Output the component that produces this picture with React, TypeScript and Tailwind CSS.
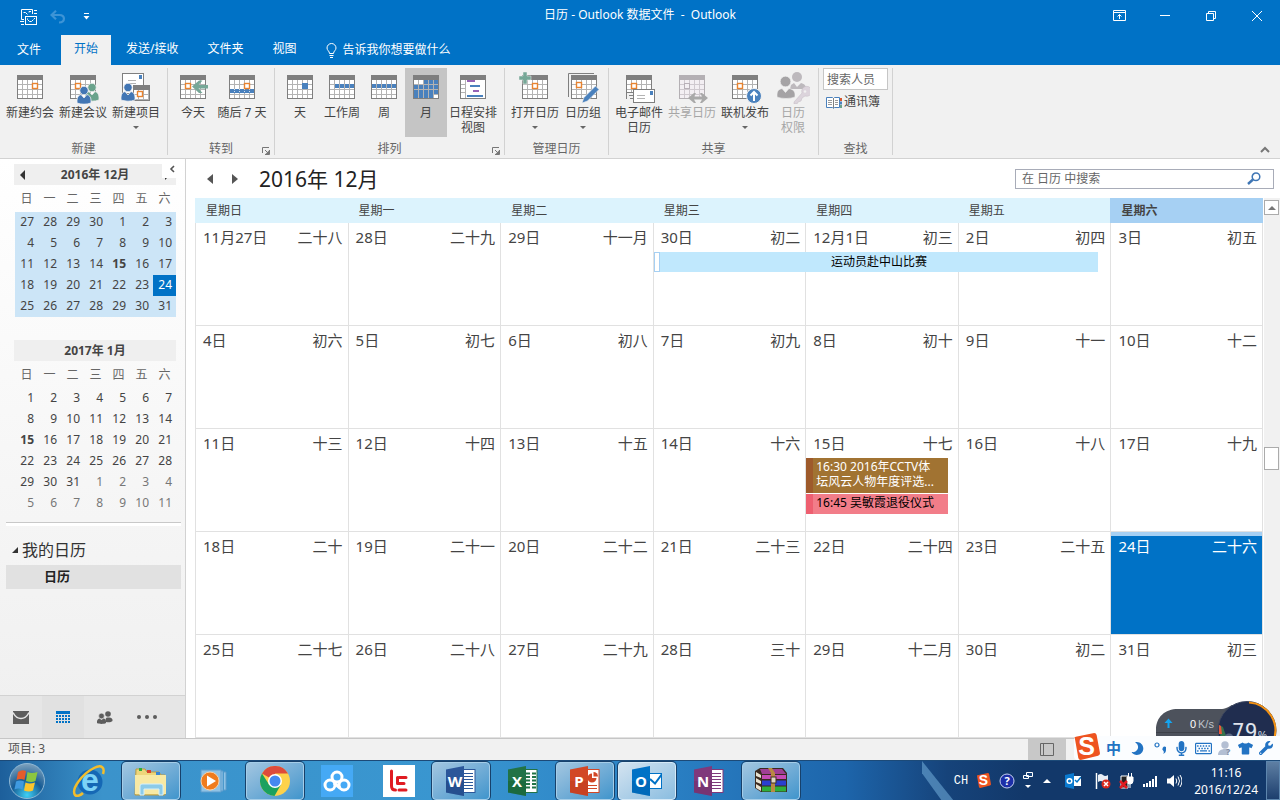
import React from "react";
import { FaMoon, FaMicrophone, FaTshirt, FaWrench, FaRegKeyboard } from "react-icons/fa";

type Kids = { children?: React.ReactNode };

const weekShort = ["日", "一", "二", "三", "四", "五", "六"];

const december = [
  [27, 28, 29, 30, 1, 2, 3],
  [4, 5, 6, 7, 8, 9, 10],
  [11, 12, 13, 14, 15, 16, 17],
  [18, 19, 20, 21, 22, 23, 24],
  [25, 26, 27, 28, 29, 30, 31],
];

const january = [
  [1, 2, 3, 4, 5, 6, 7],
  [8, 9, 10, 11, 12, 13, 14],
  [15, 16, 17, 18, 19, 20, 21],
  [22, 23, 24, 25, 26, 27, 28],
  [29, 30, 31, 1, 2, 3, 4],
  [5, 6, 7, 8, 9, 10, 11],
];

const month = [
  [["11月27日", "二十八"], ["28日", "二十九"], ["29日", "十一月"], ["30日", "初二"], ["12月1日", "初三"], ["2日", "初四"], ["3日", "初五"]],
  [["4日", "初六"], ["5日", "初七"], ["6日", "初八"], ["7日", "初九"], ["8日", "初十"], ["9日", "十一"], ["10日", "十二"]],
  [["11日", "十三"], ["12日", "十四"], ["13日", "十五"], ["14日", "十六"], ["15日", "十七"], ["16日", "十八"], ["17日", "十九"]],
  [["18日", "二十"], ["19日", "二十一"], ["20日", "二十二"], ["21日", "二十三"], ["22日", "二十四"], ["23日", "二十五"], ["24日", "二十六"]],
  [["25日", "二十七"], ["26日", "二十八"], ["27日", "二十九"], ["28日", "三十"], ["29日", "十二月"], ["30日", "初二"], ["31日", "初三"]],
];

/* ---------- ribbon icons ---------- */

// calendar sheet, 26x24, drawn with its top left corner at x, y
function Sheet({ x = 4, y = 3, w = 26, h = 24, faded = false }) {
  const frame = faded ? "#b4b0b4" : "#7f7f7f";
  const line = faded ? "#cfc9cf" : "#b3b3b3";
  const cols: number[] = [];
  const rows: number[] = [];
  for (let i = 5; i < w - 1; i += 5) cols.push(i);
  for (let i = 9; i < h - 1; i += 5) rows.push(i);
  return (
    <g shapeRendering="crispEdges">
      <rect x={x} y={y} width={w} height={h} fill={frame} />
      <rect x={x + 1} y={y + 5} width={w - 2} height={h - 6} fill={faded ? "#f3eff3" : "#fff"} />
      {cols.map((c) => (
        <rect key={c} x={x + c} y={y + 5} width="1" height={h - 6} fill={line} />
      ))}
      {rows.map((r) => (
        <rect key={r} x={x + 1} y={y + r} width={w - 2} height="1" fill={line} />
      ))}
    </g>
  );
}

function Mark({ x, y }: { x: number; y: number }) {
  return <rect x={x + 0.5} y={y + 0.5} width="5" height="5" fill="#fff" stroke="#e8832f" strokeWidth="1.4" />;
}

function Person({ x, y, color }: { x: number; y: number; color: string }) {
  return (
    <g fill={color} stroke="#f1f1f1" strokeWidth="0.8">
      <path d={`M${x - 7} ${y + 14}v-3c0-3 2-5 4-5.500l3 3.500 3-3.500c2 .5 4 2.500 4 5.500v3c-4 1.600-10 1.600-14 0z`} />
      <circle cx={x} cy={y + 1.500} r="4.200" />
    </g>
  );
}

function Ico({ children }: Kids) {
  return (
    <svg width="34" height="32" viewBox="0 0 34 32" className="shrink-0" aria-hidden="true">
      {children}
    </svg>
  );
}

function DayBlocks({ x, y, n }: { x: number; y: number; n: number }) {
  return (
    <g fill="#4a81bd" shapeRendering="crispEdges">
      {Array.from({ length: n }, (_, i) => (
        <rect key={i} x={x + i * 5} y={y} width="4" height="4" />
      ))}
    </g>
  );
}

const icons = {
  appointment: <Ico><Sheet /><Mark x={19} y={11} /></Ico>,
  meeting: (
    <Ico>
      <Sheet /><Mark x={9} y={11} />
      <Person x={26} y={14} color="#6aa38c" />
      <Person x={18} y={17} color="#4276b4" />
    </Ico>
  ),
  items: (
    <Ico>
      <rect x="3.500" y="1.500" width="21" height="20" fill="#fff" stroke="#7f7f7f" />
      <path d="M9 8.500h8M9 11.500h8" stroke="#b3b3b3" />
      <rect x="20" y="3" width="3" height="4" fill="#4a81bd" />
      <Sheet x={14} y={13} w={17} h={16} />
      <Mark x={18} y={19} />
      <Person x={9} y={14} color="#4276b4" />
    </Ico>
  ),
  today: (
    <Ico>
      <Sheet /><Mark x={9} y={11} />
      <path d="M16 14.500l7-6h3.500l-4 4.500H32v3.500h-9.500l4 4.500H23z" fill="#76a797" />
    </Ico>
  ),
  next7: (
    <Ico>
      <Sheet />
      <rect x="5" y="17" width="24" height="4" fill="#4a81bd" />
      <path d="M9.500 17v4M14.500 17v4M19.500 17v4M24.500 17v4" stroke="#d6e2ef" strokeDasharray="1 1" />
      <Mark x={19} y={11} />
    </Ico>
  ),
  day: <Ico><Sheet /><rect x="19" y="11" width="6" height="6" fill="#4a81bd" /></Ico>,
  workWeek: <Ico><Sheet /><DayBlocks x={10} y={12} n={4} /></Ico>,
  week: <Ico><Sheet /><DayBlocks x={5} y={12} n={5} /></Ico>,
  month: (
    <Ico>
      <Sheet />
      <DayBlocks x={15} y={8} n={3} />
      <DayBlocks x={5} y={13} n={5} />
      <DayBlocks x={5} y={18} n={5} />
      <DayBlocks x={5} y={22} n={4} />
    </Ico>
  ),
  schedule: (
    <Ico>
      <g shapeRendering="crispEdges">
        <rect x="4" y="3" width="26" height="24" fill="#7f7f7f" />
        <rect x="5" y="8" width="24" height="18" fill="#fff" />
        <rect x="9" y="8" width="1" height="18" fill="#b3b3b3" />
        <path d="M5 12.500h4M5 16.500h4M5 20.500h4" stroke="#b3b3b3" />
        <path d="M11 9h8M17 19h6" stroke="#9663b5" strokeWidth="2" />
        <path d="M14 14h10M11 24h16" stroke="#4a81bd" strokeWidth="2" />
      </g>
    </Ico>
  ),
  open: (
    <Ico>
      <Sheet x={4} /><Mark x={14} y={11} />
      <path d="M5 0h4v4h4v4H9v4H5V8H1V4h4z" fill="#76a797" stroke="#f1f1f1" strokeWidth="0.5" />
    </Ico>
  ),
  group: (
    <Ico>
      <path d="M2.500 25V1.500H28" fill="none" stroke="#7f7f7f" />
      <Sheet x={5} y={3} /><Mark x={10} y={10} />
      <path d="M16 31l2-5.500L29.500 14l3.500 3.500L21.500 29z" fill="#4a81bd" stroke="#f1f1f1" strokeWidth="0.6" />
    </Ico>
  ),
  email: (
    <Ico>
      <Sheet /><Mark x={9} y={11} />
      <path d="M5 20h6v8H5z" fill="#f1f1f1" />
      <path d="M5 20.500h6M7 23.500h4M8 26.500h3" stroke="#7f7f7f" />
      <rect x="11.500" y="17.500" width="21" height="13" fill="#fff" stroke="#7f7f7f" />
      <path d="M15 23.500h8M15 26.500h8" stroke="#b3b3b3" />
      <rect x="28" y="19" width="3" height="4" fill="#4a81bd" />
    </Ico>
  ),
  share: (
    <Ico>
      <Sheet faded />
      <rect x="9.500" y="11.500" width="5" height="5" fill="#f3eff3" stroke="#b8b0b8" />
      <path d="M13 26l6-5h2l-2 3.500h8L25 21h2l6 5-6 5h-2l2-3.500h-8L21 31h-2z" fill="#a9a9a9" />
    </Ico>
  ),
  publish: (
    <Ico>
      <Sheet /><Mark x={9} y={11} />
      <circle cx="26" cy="24" r="7.500" fill="#4a81bd" stroke="#f1f1f1" />
      <path d="M26 29v-9M22.500 23.500L26 20l3.500 3.500" fill="none" stroke="#fff" strokeWidth="2" />
    </Ico>
  ),
  permission: (
    <Ico>
      <g fill="#bdb9bd">
        <circle cx="21" cy="5" r="5" />
        <path d="M14 17l1-4 3-2 3 4 4-4c4 1 5 3 5 6z" />
      </g>
      <g fill="#a5a3a5" stroke="#f1f1f1" strokeWidth="0.6">
        <circle cx="9.500" cy="9.500" r="5.300" />
        <path d="M1 25v-3c0-3 2-5 5-5.500l3.500 4 3.500-4c3 .5 6 2.500 6 5.500v3c-5 2-13 2-18 0z" />
      </g>
      <path d="M18 30l8-9a5 5 0 1 1 3 3l-3 2-1 3-3 1-1 2h-3z" fill="#dcd4dc" stroke="#c3bbc3" strokeWidth="0.5" />
      <circle cx="29" cy="19.500" r="1.300" fill="#f1f1f1" />
    </Ico>
  ),
};

/* ---------- ribbon ---------- */

type RibbonButtonProps = {
  icon: React.ReactNode;
  label: string;
  second?: string;
  width?: string;
  arrow?: boolean;
  active?: boolean;
  disabled?: boolean;
};

function RibbonButton({ icon, label, second, width = "w-[53px] pr-px", arrow, active, disabled }: RibbonButtonProps) {
  return (
    <button
      disabled={disabled}
      className={`${width} flex h-[69px] flex-col items-center pt-1 text-xs leading-[15px] whitespace-nowrap ${
        active ? "bg-[#c5c5c5]" : ""
      } ${disabled ? "text-[#a6a6a6]" : "text-[#444]"}`}
    >
      {icon}
      <span className="mt-px">{label}</span>
      {second && <span>{second}</span>}
      {arrow && <span className="mt-1.5 border-x-[3px] border-t-[3px] border-x-transparent border-t-[#666]" />}
    </button>
  );
}

function RibbonGroup({ title, launcher, children }: Kids & { title: string; launcher?: boolean }) {
  return (
    <section className="relative my-[3px] flex flex-col border-r border-[#d2d2d2]">
      <div className="flex px-1">{children}</div>
      <h2 className="mt-1 text-center text-xs leading-[15px] text-[#666]">{title}</h2>
      {launcher && (
        <button aria-label={title + "选项"} className="absolute right-1 bottom-0">
          <svg width="8" height="8" viewBox="0 0 8 8">
            <path d="M.5 6V.5H7M3 3l3 3M7.500 3v4.500H3" fill="none" stroke="#777" />
            <path d="M7 3.500V7H3.500z" fill="#777" />
          </svg>
        </button>
      )}
    </section>
  );
}

function Ribbon() {
  return (
    <div className="flex h-[94px] shrink-0 border-b border-[#d2d2d2] bg-[#f1f1f1]">
      <RibbonGroup title="新建">
        <RibbonButton icon={icons.appointment} label="新建约会" />
        <RibbonButton icon={icons.meeting} label="新建会议" />
        <RibbonButton icon={icons.items} label="新建项目" arrow />
      </RibbonGroup>
      <RibbonGroup title="转到" launcher>
        <RibbonButton icon={icons.today} label="今天" width="w-[42px]" />
        <RibbonButton icon={icons.next7} label="随后 7 天" width="w-[56px]" />
      </RibbonGroup>
      <RibbonGroup title="排列" launcher>
        <RibbonButton icon={icons.day} label="天" width="w-[42px]" />
        <RibbonButton icon={icons.workWeek} label="工作周" width="w-[42px]" />
        <RibbonButton icon={icons.week} label="周" width="w-[42px]" />
        <RibbonButton icon={icons.month} label="月" width="w-[42px]" active />
        <RibbonButton icon={icons.schedule} label="日程安排" second="视图" />
      </RibbonGroup>
      <RibbonGroup title="管理日历">
        <RibbonButton icon={icons.open} label="打开日历" arrow />
        <RibbonButton icon={icons.group} label="日历组" width="w-[42px]" arrow />
      </RibbonGroup>
      <RibbonGroup title="共享">
        <RibbonButton icon={icons.email} label="电子邮件" second="日历" />
        <RibbonButton icon={icons.share} label="共享日历" disabled />
        <RibbonButton icon={icons.publish} label="联机发布" arrow />
        <RibbonButton icon={icons.permission} label="日历" second="权限" width="w-[42px]" disabled />
      </RibbonGroup>
      <RibbonGroup title="查找">
        <div className="flex h-[69px] flex-col items-start">
          <input
            aria-label="搜索人员"
            placeholder="搜索人员"
            className="h-[22px] w-[65px] border border-[#c6c6c6] bg-white px-[3px] text-xs placeholder:text-[#666]"
          />
          <button className="mt-1 flex items-center gap-0.5 pl-[3px] text-xs text-[#444]">
            <svg width="16" height="13" viewBox="0 0 16 13">
              <path d="M.5 1.500h6l1 1 1-1h5v10h-5l-1 1-1-1h-6z" fill="#fff" stroke="#4a81bd" />
              <path d="M7.500 2v10" stroke="#7f7f7f" />
              <path d="M2 4.500h4M2 6.500h4M2 8.500h4M9 4.500h3M9 6.500h3M9 8.500h3" stroke="#999" />
              <path d="M14 2h2v3h-2z" fill="#d8592f" />
              <path d="M14 5.500h2v3h-2z" fill="#4a81bd" />
              <path d="M14 9h2v3h-2z" fill="#6aa38c" />
            </svg>
            通讯簿
          </button>
        </div>
      </RibbonGroup>
      <button aria-label="折叠功能区" className="mr-2.5 mb-1 ml-auto self-end">
        <svg width="10" height="8" viewBox="0 0 10 8">
          <path d="M1 6l4-4 4 4" fill="none" stroke="#777" strokeWidth="2" />
        </svg>
      </button>
    </div>
  );
}

/* ---------- title bar ---------- */

function TitleBar() {
  const win = "flex h-[31px] w-[46px] items-center justify-center";
  return (
    <header className="shrink-0 bg-[#0072c6] text-xs text-white">
      <div className="grid h-[35px] grid-cols-[1fr_auto_1fr] items-start">
        <div className="flex h-[33px] items-center pl-5">
          <button aria-label="发送/接收所有文件夹">
            <svg width="18" height="18" viewBox="0 0 18 18" fill="none" stroke="#fff">
              <path d="M4 11.500H1.500v-10h11V6M9 4.500V3.500h2M3.500 4.500h2l2 2M14 2.500h3M14 5.500h3" />
              <rect x="5.500" y="8.500" width="11" height="8" />
              <path d="M7.500 10.500v1l2 2h2l2-2M14 10.500h1M0 13.500h4M1 16.500h3" />
            </svg>
          </button>
          <button aria-label="撤消" disabled className="ml-3">
            <svg width="16" height="14" viewBox="0 0 16 14" fill="none" stroke="#3d94d6" strokeWidth="2.200">
              <path d="M6 .8L1.500 5 6 9.200M2 5h7.500c6 0 6 7.500-.5 7.500" />
            </svg>
          </button>
          <button aria-label="自定义快速访问工具栏" className="ml-[17px]">
            <svg width="7" height="7" viewBox="0 0 7 7">
              <path d="M1 .5h5" stroke="#fff" />
              <path d="M.5 3h6l-3 3.500z" fill="#fff" />
            </svg>
          </button>
        </div>
        <h1 className="pt-[7px] leading-4 whitespace-pre">日历 - Outlook 数据文件  -  Outlook</h1>
        <div className="flex justify-end">
          <button aria-label="功能区显示选项" className={win}>
            <svg width="13" height="11" viewBox="0 0 13 11" fill="none" stroke="#fff">
              <path d="M.5.5h12v10H.5zM.5 2.500h12M6.500 9V4.500M4.500 6.500l2-2 2 2" />
            </svg>
          </button>
          <button aria-label="最小化" className={win}>
            <span className="h-px w-2.5 bg-white" />
          </button>
          <button aria-label="向下还原" className={win}>
            <svg width="10" height="10" viewBox="0 0 10 10" fill="none" stroke="#fff">
              <path d="M.5 2.500h7v7h-7zM2.500 2.500v-2h7v7h-2" />
            </svg>
          </button>
          <button aria-label="关闭" className={win}>
            <svg width="10" height="10" viewBox="0 0 10 10" stroke="#fff">
              <path d="M0 0l10 10M10 0L0 10" />
            </svg>
          </button>
        </div>
      </div>
      <nav className="flex h-[30px] items-stretch gap-px leading-4">
        <button className="w-[60px] pr-0.5">文件</button>
        <button className="bg-[#f1f1f1] px-[13px] pb-0.5 text-[#0072c6]">开始</button>
        <button className="px-[14px] pb-0.5">发送/接收</button>
        <button className="px-[14px] pb-0.5">文件夹</button>
        <button className="px-[14px] pb-0.5">视图</button>
        <button className="flex items-center gap-1.5 px-[14px]">
          <svg width="11" height="15" viewBox="0 0 11 15" fill="none" stroke="#fff">
            <path d="M3.500 10.500C3.500 8 1 7.500 1 5a4.500 4.500 0 0 1 9 0c0 2.500-2.500 3-2.500 5.500zM3.500 12.500h4M4 14.500h3" />
          </svg>
          告诉我你想要做什么
        </button>
      </nav>
    </header>
  );
}

/* ---------- sidebar ---------- */

type MiniMonthProps = { title: string; weeks: number[][]; current?: boolean };

function MiniMonth({ title, weeks, current }: MiniMonthProps) {
  return (
    <section className="mr-[9px] ml-[14px] text-xs text-[#444]">
      <div className="relative flex h-[21px] items-center justify-center bg-[#efefef]">
        {current && (
          <button aria-label="上一月" className="absolute left-1.5 border-y-[5px] border-r-[5px] border-y-transparent border-r-[#333]" />
        )}
        <h2 className="font-bold">{title}</h2>
        {current && (
          <>
            <button aria-label="下一月" className="absolute right-1.5 border-y-[5px] border-l-[5px] border-y-transparent border-l-[#333]" />
            <button aria-label="折叠文件夹窗格" className="absolute -top-1 -right-1.5 flex h-[18px] w-5 items-center justify-center bg-white">
              <svg width="6" height="8" viewBox="0 0 6 8">
                <path d="M5 1L2 4l3 3" fill="none" stroke="#555" strokeWidth="1.600" />
              </svg>
            </button>
          </>
        )}
      </div>
      <div className="pl-px">
        <table className="w-full table-fixed border-separate border-spacing-0">
          <thead>
            <tr className="h-[27px]">
              {weekShort.map((d) => (
                <th key={d} className="p-0 font-normal text-[#666]">{d}</th>
              ))}
            </tr>
          </thead>
          <tbody className={current ? "bg-[#cce5f7]" : ""}>
            {weeks.map((week, r) => (
              <tr key={r} className="h-[21px]">
                {week.map((d, c) => {
                  const today = current && d === 24;
                  const nextMonth = !current && r > 3 && d < 20;
                  return (
                    <td
                      key={c}
                      className={`p-0 pr-1 pb-0.5 text-right leading-[19px] ${today ? "bg-[#0072c6] text-white" : ""} ${
                        nextMonth ? "text-[#777]" : ""
                      } ${d === 15 ? "font-bold" : ""}`}
                    >
                      {d}
                    </td>
                  );
                })}
              </tr>
            ))}
          </tbody>
        </table>
      </div>
    </section>
  );
}

function Sidebar() {
  const nav = "flex h-full w-[42px] items-center justify-center";
  return (
    <aside className="flex w-[186px] shrink-0 flex-col border-r border-[#d2d2d2] bg-linear-to-b from-white to-[#efefef] pt-[5px]">
      <MiniMonth title="2016年 12月" weeks={december} current />
      <div className="h-[23px]" />
      <MiniMonth title="2017年 1月" weeks={january} />
      <div className="mt-2 mr-1 ml-1.5 h-1 border-t border-[#c8c8c8] bg-white" />
      <div className="mr-1 ml-1.5">
        <h2 className="mt-2.5 mb-0.5 flex h-[27px] items-center gap-1 pl-1.5 text-base leading-5 text-[#333]">
          <svg width="6" height="6" viewBox="0 0 6 6">
            <path d="M6 0v6H0z" fill="#333" />
          </svg>
          我的日历
        </h2>
        <a href="#calendar" className="block h-6 bg-[#e1e1e1] pl-[38px] text-[13px] leading-[22px] font-bold text-[#222]">
          日历
        </a>
      </div>
      <nav className="mt-auto flex h-[43px] items-center border-t border-[#d2d2d2] bg-[#e6e6e6]">
        <button aria-label="邮件" className={nav}>
          <svg width="16" height="13" viewBox="0 0 16 13">
            <path d="M0 0h16v13H0z" fill="#5d5d5d" />
            <path d="M0 1.500c4 8 12 8 16 0" fill="none" stroke="#e6e6e6" strokeWidth="1.500" />
          </svg>
        </button>
        <button aria-label="日历" className={nav + " bg-[#e1e1e1]"}>
          <svg width="14" height="13" viewBox="0 0 14 13" fill="#0072c6" shapeRendering="crispEdges">
            <rect width="14" height="3" />
            {[4, 7, 10].map((y) => [0, 3, 6, 9, 12].map((x) => <rect key={`${x}-${y}`} x={x} y={y} width="2" height="2" />))}
          </svg>
        </button>
        <button aria-label="人员" className={nav}>
          <svg width="16" height="13" viewBox="0 0 16 13" fill="#5d5d5d">
            <circle cx="11" cy="3" r="2.800" />
            <path d="M9 11c-1-3 0-5 2-4.500 3-.5 5 1 4.500 3.500-1.500 1.500-4 1.500-6.500 1z" />
            <circle cx="4.500" cy="5" r="2.800" stroke="#e6e6e6" strokeWidth=".5" />
            <path d="M0 12c-.5-3 1.500-4.500 2.500-4.500l2 1.500 2-1.500C8 7.500 9.500 9 9 12c-2 1.200-7 1.200-9 0z" />
          </svg>
        </button>
        <button aria-label="更多" className={nav}>
          <svg width="20" height="4" viewBox="0 0 20 4" fill="#5d5d5d">
            <circle cx="2" cy="2" r="2" /><circle cx="10" cy="2" r="2" /><circle cx="18" cy="2" r="2" />
          </svg>
        </button>
      </nav>
    </aside>
  );
}

/* ---------- month view ---------- */

function MonthCell({ row, col }: { row: number; col: number }) {
  const [day, lunar] = month[row][col];
  const today = row === 3 && col === 6;
  return (
    <td
      className={`relative border-b border-l border-[#e1e1e1] p-0 align-top ${col === 6 ? "border-r" : ""} ${
        today ? "bg-[#0072c6] bg-clip-padding text-white" : ""
      }`}
    >
      <div className={`flex h-[29px] justify-between border-t-4 pr-[5px] pl-[7px] text-[15px] leading-[21px] ${today ? "border-[#a6d0f3]" : "border-transparent"}`}>
        <span>{day}</span>
        <span>{lunar}</span>
      </div>
      {row === 0 && col === 3 && (
        <a
          href="#event"
          className="absolute top-[29px] left-0 z-10 flex h-5 w-[calc(300%-10px)] items-center bg-[#c0e8fd] text-xs text-black"
        >
          <span className="h-full w-1.5 border border-[#a6d0f3] bg-white" />
          <span className="grow text-center">运动员赴中山比赛</span>
        </a>
      )}
      {row === 2 && col === 4 && (
        <div className="mr-2.5 flex flex-col gap-px text-xs leading-[15px]">
          <a href="#event" className="h-[35px] border-l-[7px] border-[#9e5a2b] bg-[#a17332] pt-px pr-2 pl-[3px] text-white">
            16:30 2016年CCTV体坛风云人物年度评选...
          </a>
          <a href="#event" className="h-5 border-l-[7px] border-[#ee5f70] bg-[#f27d89] pt-px pl-[3px] text-black">
            16:45 吴敏霞退役仪式
          </a>
        </div>
      )}
    </td>
  );
}

function MonthView() {
  return (
    <main className="flex min-w-0 grow flex-col bg-white pl-[9px]">
      <div className="flex h-[39px] shrink-0 items-center pr-1.5 pl-3">
        <button aria-label="后退" className="border-y-[5px] border-r-[6px] border-y-transparent border-r-[#555]" />
        <button aria-label="前进" className="ml-[19px] border-y-[5px] border-l-[6px] border-y-transparent border-l-[#555]" />
        <h2 className="ml-[21px] text-[21px] leading-6 text-[#222]">2016年 12月</h2>
        <label className="ml-auto flex h-5 w-[259px] items-center border border-[#a8acb8] pr-3">
          <input
            aria-label="在 日历 中搜索"
            placeholder="在 日历 中搜索"
            className="h-full min-w-0 grow pl-1.5 text-xs outline-none placeholder:text-[#666]"
          />
          <svg width="14" height="13" viewBox="0 0 14 13" fill="none" stroke="#3f76b5">
            <circle cx="9" cy="4.800" r="3.800" strokeWidth="1.500" />
            <path d="M6 7.500L1 12" strokeWidth="2.400" />
          </svg>
        </label>
      </div>
      <div className="flex min-h-0 grow">
        <div className="min-w-0 grow">
          <table className="h-full w-full table-fixed border-separate border-spacing-0 text-[#444]">
            <thead>
              <tr className="h-[25px]">
                {weekShort.map((d, i) => (
                  <th
                    key={d}
                    className={`p-0 pl-[11px] text-left text-xs ${i === 6 ? "bg-[#a6d0f3] font-bold" : "bg-[#dcf3fd] font-normal"}`}
                  >
                    星期{d}
                  </th>
                ))}
              </tr>
            </thead>
            <tbody>
              {month.map((week, r) => (
                <tr key={r} className="h-[103px]">
                  {week.map((_, c) => (
                    <MonthCell key={c} row={r} col={c} />
                  ))}
                </tr>
              ))}
            </tbody>
          </table>
        </div>
        <div className="ml-px flex w-4 shrink-0 flex-col items-start bg-[#f1f1f1] pt-0.5">
          <button aria-label="向上滚动" className="flex h-[15px] w-[15px] items-center justify-center border border-[#ababab] bg-white">
            <span className="border-x-4 border-b-4 border-x-transparent border-b-[#777]" />
          </button>
          <div className="grow-[232]" />
          <div className="h-[23px] w-[15px] border border-[#ababab] bg-white" />
          <div className="grow-[268]" />
        </div>
      </div>
    </main>
  );
}

/* ---------- status bar and floating tools ---------- */

function SogouMark({ size }: { size: number }) {
  return (
    <svg width={size} height={size} viewBox="0 0 28 28">
      <path d="M2 6Q1 4 3 4L22 0q2 0 2.500 2L28 21q0 2-2 2.500L8 28q-2 0-2.500-2z" fill="#ee5420" />
      <text x="14" y="23" fontSize="26" fontWeight="bold" textAnchor="middle" fill="#fff" fontFamily="Liberation Sans">S</text>
    </svg>
  );
}

function SpeedBall() {
  return (
    <svg width="124" height="60" viewBox="0 0 124 60" className="absolute right-0 -bottom-px" fontFamily="Liberation Sans, sans-serif">
      <path d="M0 40V29C0 16 9 8 22 8h42c6 0 8-2 12-4l10 50H22C9 54 0 46 0 40z" fill="#4d525c" />
      <path d="M0 31.500h64" stroke="#3d4149" />
      <path d="M12.500 27v-6" stroke="#15a5f0" strokeWidth="2" />
      <path d="M8.500 22l4-4.500 4 4.500z" fill="#15a5f0" />
      <path d="M12.500 36v8" stroke="#f59a16" strokeWidth="2" />
      <text x="34" y="27" fontSize="11" fill="#fff">0</text>
      <text x="42" y="27" fontSize="11" fill="#bfc3ca">K/s</text>
      <text x="34" y="43" fontSize="11" fill="#fff">0</text>
      <text x="42" y="43" fontSize="11" fill="#bfc3ca">K/s</text>
      <circle cx="91" cy="29.500" r="29" fill="#202d4f" stroke="#3c465f" />
      <path d="M93 1.500a28 28 0 0 1 24 39" fill="none" stroke="#f39112" strokeWidth="2" />
      <path d="M63 24l4 2 2 6 4 8h-8z" fill="#35724d" />
      <path d="M63 24l2 1 1 8h-3z" fill="#e8583a" />
      <circle cx="73" cy="37" r="4.500" fill="#5a6884" />
      <text x="76" y="38" fontSize="21" fill="#dfe3ec" fontFamily="DejaVu Sans Mono, monospace">79</text>
      <text x="102" y="38" fontSize="10" fill="#dfe3ec">%</text>
    </svg>
  );
}

function StatusBar() {
  return (
    <footer className="relative flex h-[22px] shrink-0 items-stretch border-t border-[#c6c6c6] bg-[#f1f1f1] text-xs leading-5 text-[#555]">
      <span className="pl-2">项目: 3</span>
      <button aria-label="普通视图" className="mr-[214px] ml-auto flex w-[38px] items-center justify-center bg-[#c8c8c8]">
        <svg width="14" height="13" viewBox="0 0 14 13" fill="none" stroke="#666">
          <path d="M.5.5h13v12H.5zM3.500 1v11" />
        </svg>
      </button>
      <SpeedBall />
      <div className="absolute right-0 bottom-0 flex h-6 w-[206px] items-center gap-1.5 rounded-l bg-[#fbfdff] pr-1 pl-8 text-[#2273c3]">
        <span className="absolute bottom-0 -left-px"><SogouMark size={27} /></span>
        <span className="text-[15px] font-bold">中</span>
        <FaMoon size={13} className="ml-1 -scale-x-100" />
        <svg width="14" height="12" viewBox="0 0 14 12" className="ml-1">
          <circle cx="3" cy="3" r="2" fill="none" stroke="#2273c3" strokeWidth="1.200" />
          <path d="M12 5v3c0 2-1 3-3 4 1-1 1-2 .5-3a2 2 0 1 1 2.500-4z" fill="#2273c3" />
        </svg>
        <FaMicrophone size={15} />
        <FaRegKeyboard size={17} />
        <svg width="14" height="15" viewBox="0 0 14 15" fill="#b3bfd3">
          <circle cx="7" cy="4" r="3.700" />
          <path d="M0 14c0-4 3-6 7-6s4 1 4 1l-1 5z" />
          <text x="8" y="14" fontSize="9" fontWeight="bold" fill="#7d8ba4">?</text>
        </svg>
        <FaTshirt size={15} />
        <FaWrench size={14} />
      </div>
    </footer>
  );
}

/* ---------- taskbar ---------- */

function OfficeIcon({ letter, color, dark, kind }: { letter: string; color: string; dark: string; kind: string }) {
  return (
    <svg width="30" height="30" viewBox="0 0 30 30">
      {kind === "mail" ? (
        <>
          <rect x="12" y="7.500" width="17.500" height="15" fill="#fff" stroke={color} />
          <path d="M18 13l5 4.500L30 8" fill="none" stroke={color} strokeWidth="2" />
        </>
      ) : (
        <>
          <rect x="12" y="3.500" width="17" height="23" fill="#fff" stroke={color} />
          {kind === "lines" && <path d="M18 7.500h9M18 10.500h9M18 13.500h9M18 16.500h9M18 19.500h9M18 22.500h9" stroke={color} />}
          {kind === "grid" && (
            <path d="M18 7.500h4M24 7.500h4M18 11h4M24 11h4M18 14.500h4M24 14.500h4M18 18h4M24 18h4M18 21.500h4M24 21.500h4" stroke={color} strokeWidth="2" />
          )}
          {kind === "chart" && (
            <>
              <path d="M22 7.500a4.500 4.500 0 1 0 4.500 4.500H22z" fill={color} />
              <path d="M23.500 6v4.500H28A4.500 4.500 0 0 0 23.500 6z" fill={color} />
              <path d="M18 19.500h9M18 22.500h9" stroke={color} />
            </>
          )}
        </>
      )}
      <path d="M0 3.500L18 0v30L0 26.500z" fill={color} />
      <path d="M0 15h18v15L0 26.500z" fill={dark} opacity="0.4" />
      <text x="9" y="20.500" fontSize="15" fontWeight="bold" textAnchor="middle" fill="#fff" fontFamily="Open Sans, sans-serif">{letter}</text>
    </svg>
  );
}

function TaskButton({ name, open, bright, children }: Kids & { name: string; open?: boolean; bright?: boolean }) {
  let look = "border-transparent";
  if (bright) look = "border-[#d5e9f7] bg-linear-to-br from-[#d3e3f0] to-[#8abde0] ring-1 ring-[#17416b]";
  else if (open) look = "border-[#a5cde8] bg-linear-to-br from-[#a2c6e0] to-[#3f95cc] ring-1 ring-[#17416b]";
  return (
    <button aria-label={name} className={`flex h-[38px] w-[58px] items-center justify-center rounded-sm border ${look}`}>
      {children}
    </button>
  );
}

function Taskbar() {
  return (
    <div className="relative flex h-10 shrink-0 items-center overflow-hidden border-t border-[#1c4a78] bg-[linear-gradient(90deg,#1d5f9b_0%,#3b93cb_8%,#3996d0_35%,#2a80c4_52%,#1d65ab_66%,#16437a_74%,#12386a_80%,#12386a_100%)]">
      <svg width="90" height="40" viewBox="0 0 90 40" className="absolute top-0 left-[72%]">
        <path d="M0 0l32 40h-12L-6 4z" fill="#6da7d4" opacity="0.600" />
      </svg>
      <button aria-label="开始" className="mr-[6px] w-[54px] pl-2">
        <svg width="38" height="38" viewBox="0 0 38 38">
          <defs>
            <radialGradient id="orb" cx=".5" cy=".9" r=".9">
              <stop offset="0" stopColor="#3fd0f5" />
              <stop offset=".5" stopColor="#165b94" />
              <stop offset="1" stopColor="#7fa2bd" />
            </radialGradient>
          </defs>
          <circle cx="19" cy="19" r="17.500" fill="url(#orb)" stroke="#8fb8d5" />
          <path d="M10 10q4-3 8-1l-1.500 9q-4-2-8 0z" fill="#e65c2b" />
          <path d="M19.500 10q4 2 10 0l-2 9q-4 2-9.500 0z" fill="#8cc63f" />
          <path d="M8 19.500q4-2 8 0l-1.500 8q-4-2-8 0z" fill="#3f9ae0" />
          <path d="M17.500 20.500q4 2 9.500 0l-2 8q-4 2-9 0z" fill="#fbc52c" />
        </svg>
      </button>
      <div className="flex items-center gap-1">
        <TaskButton name="Internet Explorer">
          <svg width="34" height="34" viewBox="0 0 34 34">
            <circle cx="18" cy="18" r="12.500" fill="#1568b5" />
            <text x="18" y="27" fontSize="32" fontWeight="bold" textAnchor="middle" fill="#7cd3f7" fontFamily="Liberation Sans">e</text>
            <path d="M31 10C33 4 30 0 22 4 10 10-1 25 3 31c2 2 6 0 8-2" fill="none" stroke="#f2bd2c" strokeWidth="2.500" />
          </svg>
        </TaskButton>
        <TaskButton name="资源管理器" open>
          <svg width="34" height="30" viewBox="0 0 34 30">
            <path d="M2 3h9l2 3h12l2 3h4v20H1z" fill="#eed67b" stroke="#b79a42" />
            <path d="M1 9h31v19H1z" fill="#f8e9a4" />
            <path d="M5 2h3v3H5z" fill="#2fae3b" /><path d="M13 4h4v3h-4z" fill="#d9402c" /><path d="M22 6h4v3h-4z" fill="#3a86d4" />
            <path d="M6 29v-9q0-2 2-2h19q2 0 2 2v9h-4v-6H10v6z" fill="#8ccbe9" stroke="#d6f0fb" />
          </svg>
        </TaskButton>
        <TaskButton name="Windows Media Player">
          <svg width="28" height="26" viewBox="0 0 28 26">
            <path d="M2 2h20v22H2zM22 3h2v20h-2M25 4h2v18h-2" fill="#8fc3e6" stroke="#5d9ccc" />
            <circle cx="11" cy="13" r="9" fill="#f07c1e" stroke="#fbd0a3" />
            <path d="M8 7.500l9 5.500-9 5.500z" fill="#fff" />
          </svg>
        </TaskButton>
        <TaskButton name="Chrome" open>
          <svg width="30" height="30" viewBox="0 0 30 30">
            <circle cx="15" cy="15" r="15" fill="#fdd24a" />
            <path d="M15 15L2 7.500A15 15 0 0 1 28 7.500H15z" fill="#de4b3b" />
            <path d="M2 7.500A15 15 0 0 0 14.500 30l6.500-11.500-12 0z" fill="#1ba15f" />
            <circle cx="15" cy="15" r="7" fill="#fff" />
            <circle cx="15" cy="15" r="5.500" fill="#4688f1" />
          </svg>
        </TaskButton>
        <TaskButton name="百度云">
          <svg width="32" height="32" viewBox="0 0 32 32" fill="none" stroke="#fff" strokeWidth="3">
            <rect width="32" height="32" fill="#45a9f5" stroke="none" />
            <circle cx="9" cy="20" r="5" /><circle cx="23" cy="20" r="5" /><circle cx="16" cy="12" r="5" />
            <path d="M13 18l6 5" />
          </svg>
        </TaskButton>
        <TaskButton name="乐视视频">
          <svg width="32" height="32" viewBox="0 0 32 32" fill="none" stroke="#e01b22" strokeWidth="3" strokeLinecap="round">
            <rect width="32" height="32" fill="#fff" stroke="none" />
            <path d="M8.500 6v15q0 4 4 4M16 12.500h7M16 18.500h5M16 25h7M14.500 12.500v6" />
          </svg>
        </TaskButton>
        <TaskButton name="Word" open><OfficeIcon letter="W" color="#2b579a" dark="#1d4480" kind="lines" /></TaskButton>
        <TaskButton name="Excel"><OfficeIcon letter="X" color="#217346" dark="#155c35" kind="grid" /></TaskButton>
        <TaskButton name="PowerPoint" open><OfficeIcon letter="P" color="#d24726" dark="#b83a1d" kind="chart" /></TaskButton>
        <TaskButton name="Outlook" open bright><OfficeIcon letter="O" color="#0072c6" dark="#005fa8" kind="mail" /></TaskButton>
        <TaskButton name="OneNote"><OfficeIcon letter="N" color="#80397b" dark="#6b2c67" kind="lines" /></TaskButton>
        <TaskButton name="WinRAR" open>
          <svg width="32" height="25" viewBox="0 0 32 25">
            <path d="M5 0h23l4 5v19H6l-6-4V3z" fill="#3b2a20" />
            <path d="M5 1h22l4 5H7z" fill="#a03f94" />
            <path d="M7 7h24v4H7z" fill="#c44ab4" /><path d="M7 12.500h24v5H7z" fill="#2a3fd0" /><path d="M7 18.500h24v5H7z" fill="#2fae3b" />
            <path d="M1 4l5 3v3L1 8zM1 10l5 3v3l-5-2zM1 16l5 3v4l-5-3z" fill="#e8e2d0" />
            <path d="M17 0l3 5v19h-4V5l-3-5z" fill="#b98a42" /><rect x="16" y="9" width="5" height="6" fill="#ded6c4" stroke="#403020" />
          </svg>
        </TaskButton>
      </div>
      <div className="ml-auto flex h-full items-center gap-2 text-xs text-white">
        <span className="font-['Liberation_Mono',monospace]">CH</span>
        <SogouMark size={15} />
        <svg width="16" height="16" viewBox="0 0 16 16">
          <circle cx="8" cy="8" r="7" fill="#1c2fa8" stroke="#c5cff0" />
          <text x="8" y="12" fontSize="11" fontWeight="bold" textAnchor="middle" fill="#fff">?</text>
        </svg>
        <svg width="10" height="18" viewBox="0 0 10 18">
          <path d="M3.500.5h6v4h-6zM.5 3.500h5v3h-5z" fill="#16437a" stroke="#fff" />
          <path d="M2 13h6l-3 3z" fill="#fff" />
        </svg>
        <button aria-label="显示隐藏的图标" className="mr-1.5 ml-0.5 border-x-4 border-b-4 border-x-transparent border-b-white" />
        <svg width="16" height="16" viewBox="0 0 16 16">
          <path d="M8 3h8v10H8z" fill="#fff" />
          <path d="M10 7l2 2 4-5" fill="none" stroke="#0072c6" strokeWidth="1.500" />
          <path d="M0 2l9-2v16l-9-2z" fill="#0a7ad0" />
          <circle cx="4.500" cy="8" r="2.300" fill="none" stroke="#fff" strokeWidth="1.500" />
        </svg>
        <svg width="16" height="16" viewBox="0 0 16 16" className="ml-1.5">
          <path d="M1.500 0v16" stroke="#fff" strokeWidth="1.500" />
          <path d="M3 2q3-2 5 0t5 0v7q-3 2-5 0t-5 0z" fill="#e8eef5" />
          <circle cx="11" cy="11" r="4.500" fill="#d9281c" />
          <path d="M9 9l4 4M13 9l-4 4" stroke="#fff" strokeWidth="1.500" />
        </svg>
        <svg width="16" height="16" viewBox="0 0 16 16">
          <path d="M2 3h7v12H2z" fill="#222" stroke="#fff" />
          <path d="M8 4h6v4q0 3-3 3t-3-3zM9.500 4V0M12.500 4V0M11 11v4" fill="#fff" stroke="#fff" />
          <path d="M1 8l7 7M8 8l-7 7" stroke="#e01b22" strokeWidth="2.500" />
        </svg>
        <svg width="16" height="12" viewBox="0 0 16 12" fill="#fff">
          <path d="M0 9h2v3H0zM3 8h2v4H3zM6 6h2v6H6zM9 4h2v8H9zM12 1h2v11h-2z" />
        </svg>
        <svg width="15" height="14" viewBox="0 0 15 14">
          <path d="M0 4.500h3L7 1v12L3 9.500H0z" fill="#fff" />
          <path d="M9 4.500q1.500 2.500 0 5M11 2.500q3 4.500 0 9M13 1q4 6 0 12" fill="none" stroke="#fff" />
        </svg>
        <time className="ml-1 text-center leading-[17px]">
          11:16
          <br />
          2016/12/24
        </time>
        <button aria-label="显示桌面" className="h-full w-3.5 border border-[#5d86ae] bg-linear-to-b from-[#5e7fa3] to-[#1d3f6e]" />
      </div>
    </div>
  );
}

export default function App() {
  return (
    <div className="flex h-screen min-h-[800px] flex-col overflow-hidden bg-white font-['Noto_Sans','Noto_Sans_CJK_SC',sans-serif]">
      <TitleBar />
      <Ribbon />
      <div className="flex min-h-0 grow">
        <Sidebar />
        <MonthView />
      </div>
      <StatusBar />
      <Taskbar />
    </div>
  );
}
